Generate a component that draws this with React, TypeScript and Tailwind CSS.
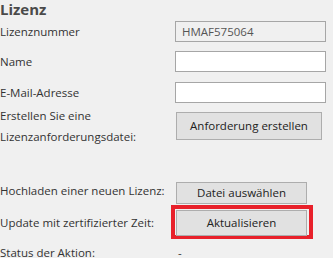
export default function App() {
  const text = "shrink-0 text-[11.5px] text-[#333] leading-[21px]";
  const input = "w-[151px] h-[21px] border border-[#a6a6a6] bg-white px-[6px] text-[11.5px] outline-none";
  const btn = "w-full h-full bg-[#e1e1e1] border border-[#adadad] text-[11.5px] text-[#222]";

  return (
    <div className="w-[333px] h-[258px] overflow-hidden bg-[#f0f0f0] font-['Open_Sans',sans-serif]">
      <div className="flex flex-col">
        <h2 className="h-[18px] text-[15px] leading-[18px] font-bold text-[#4a4a4a]">Lizenz</h2>

        <div className="mt-[3px] flex h-[21px] items-center">
          <span className={text + " w-[175px]"}>Lizenznummer</span>
          <input readOnly value="HMAF575064" className={input + " !bg-[#f0f0f0] text-[#555]"} />
        </div>

        <div className="mt-[9px] flex h-[21px] items-center">
          <span className={text + " w-[175px]"}>Name</span>
          <input className={input} />
        </div>

        <div className="mt-[10px] flex h-[21px] items-center">
          <span className={text + " w-[175px]"}>E-Mail-Adresse</span>
          <input className={input} />
        </div>

        <div className="mt-[9px] flex h-[28px] items-center">
          <span className={text + " w-[176px]"}>Erstellen Sie eine<br />Lizenzanforderungsdatei:</span>
          <div className="h-[28px] w-[146px]">
            <button className={btn}>Anforderung erstellen</button>
          </div>
        </div>

        <div className="mt-[39px] flex h-[22px] items-center">
          <span className={text + " w-[176px]"}>Hochladen einer neuen Lizenz:</span>
          <div className="h-[22px] w-[131px]">
            <button className={btn}>Datei auswählen</button>
          </div>
        </div>

        <div className="mt-[4px] flex h-[34px] items-center">
          <span className={text + " w-[171px]"}>Update mit zertifizierter Zeit:</span>
          <div className="h-[34px] w-[142px] border-4 border-[#e8202a] pl-px pr-[2px]">
            <button className={btn}>Aktualisieren</button>
          </div>
        </div>

        <div className="mt-[3px] flex h-[21px] items-center">
          <span className={text + " w-[178px]"}>Status der Aktion:</span>
          <span className="text-[11.5px] text-[#333]">-</span>
        </div>
      </div>
    </div>
  );
}
